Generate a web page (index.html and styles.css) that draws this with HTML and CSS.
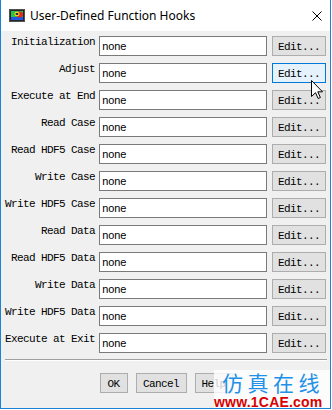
FILE: index.html
```html
<!DOCTYPE html>
<html>
<head>
<meta charset="utf-8">
<title>User-Defined Function Hooks</title>
<link rel="stylesheet" href="styles.css">
</head>
<body>
<div class="window">
  <div class="titlebar">
    <svg class="app-icon" viewBox="0 0 16 13" width="16" height="13">
      <rect x="0" y="0" width="16" height="13" fill="#505050"/>
      <rect x="1" y="1" width="14" height="11" fill="#262626"/>
      <rect x="2" y="2" width="12" height="9" fill="#27c24a"/>
      <rect x="2" y="8" width="12" height="3" fill="#1f58e6"/>
      <ellipse cx="10.5" cy="5.5" rx="3.5" ry="3" fill="#e3261f"/>
      <ellipse cx="8" cy="5" rx="2.6" ry="2.2" fill="#f6d21c"/>
      <ellipse cx="8" cy="5" rx="1.5" ry="1.1" fill="#141446"/>
    </svg>
    <span class="title">User-Defined Function Hooks</span>
    <svg class="close" viewBox="0 0 10 10" width="10" height="10">
      <path d="M0.5 0.5 L9.5 9.5 M9.5 0.5 L0.5 9.5" stroke="#000" stroke-width="1" fill="none"/>
    </svg>
  </div>
  <div class="client">
    <div class="hooks">
      <span class="lbl">Initialization</span><div class="field">none</div><button class="btn edit">Edit...</button>
      <span class="lbl">Adjust</span><div class="field">none</div><button class="btn edit hover">Edit...</button>
      <span class="lbl">Execute at End</span><div class="field">none</div><button class="btn edit">Edit...</button>
      <span class="lbl">Read Case</span><div class="field">none</div><button class="btn edit">Edit...</button>
      <span class="lbl">Read HDF5 Case</span><div class="field">none</div><button class="btn edit">Edit...</button>
      <span class="lbl">Write Case</span><div class="field">none</div><button class="btn edit">Edit...</button>
      <span class="lbl">Write HDF5 Case</span><div class="field">none</div><button class="btn edit">Edit...</button>
      <span class="lbl">Read Data</span><div class="field">none</div><button class="btn edit">Edit...</button>
      <span class="lbl">Read HDF5 Data</span><div class="field">none</div><button class="btn edit">Edit...</button>
      <span class="lbl">Write Data</span><div class="field">none</div><button class="btn edit">Edit...</button>
      <span class="lbl">Write HDF5 Data</span><div class="field">none</div><button class="btn edit">Edit...</button>
      <span class="lbl">Execute at Exit</span><div class="field">none</div><button class="btn edit">Edit...</button>
    </div>
    <div class="sep"></div>
    <div class="actions">
      <button class="btn ok">OK</button>
      <button class="btn cancel">Cancel</button>
      <button class="btn help">Help</button>
    </div>
  </div>
  <div class="watermark">
    <div class="wm-cn">仿真在线</div>
    <div class="wm-url">www.1CAE.com</div>
  </div>
  <svg class="cursor" viewBox="0 0 12 19" width="12" height="19">
    <path d="M0.5 0.5 L0.5 16.5 L4.5 12.7 L7.2 18.5 L9.4 17.5 L6.8 11.8 L11.5 11.8 Z" fill="#fff" stroke="#000" stroke-width="1" stroke-linejoin="miter"/>
  </svg>
</div>
</body>
</html>
```

FILE: styles.css
```css
html, body {
  margin: 0;
  padding: 0;
}
body {
  width: 332px;
  height: 410px;
  background: #fff;
  overflow: hidden;
}
.window {
  position: relative;
  width: 331px;
  height: 409px;
  box-sizing: border-box;
  border: 1px solid #1883d7;
  border-top: none;
  display: flex;
  flex-direction: column;
  background: #f0f0f0;
  font-family: "Liberation Mono", monospace;
  font-size: 11px;
  letter-spacing: -0.6px;
  color: #000;
}
.titlebar {
  flex: none;
  height: 31px;
  background: #fff;
  display: flex;
  align-items: center;
  padding: 0 8px 0 8px;
}
.app-icon {
  flex: none;
  margin-right: 5px;
}
.title {
  flex: 1;
  font-family: "Noto Sans", sans-serif;
  font-size: 12px;
  letter-spacing: 0;
  line-height: 16px;
  margin-top: 1px;
}
.close {
  flex: none;
}
.client {
  flex: 1;
  padding: 5px 3px 0 4px;
}
.hooks {
  display: grid;
  grid-template-columns: 90px 168px 55px;
  grid-auto-rows: 20px;
  column-gap: 4px;
  row-gap: 7px;
}
.lbl {
  text-align: right;
  white-space: nowrap;
  line-height: 12px;
  align-self: start;
}
.field {
  box-sizing: border-box;
  height: 20px;
  border: 1px solid #7a7a7a;
  background: #fff;
  padding: 4px 2px 0;
  line-height: 12px;
}
.btn {
  display: block;
  box-sizing: border-box;
  height: 20px;
  margin: 0;
  border: 1px solid #adadad;
  border-radius: 0;
  background: #e1e1e1;
  color: #000;
  font: inherit;
  letter-spacing: inherit;
  padding: 2px 0 0;
  line-height: 16px;
  text-align: center;
}
.edit {
  width: 54px;
  justify-self: end;
}
.edit.hover {
  background: #e5f1fb;
  border-color: #0078d7;
}
.sep {
  margin-top: 6px;
  border-top: 1px solid #a0a0a0;
  border-bottom: 1px solid #fff;
}
.actions {
  display: flex;
  justify-content: center;
  gap: 8px;
  margin-top: 12px;
}
.ok { width: 28px; }
.cancel { width: 51px; }
.help { width: 38px; }
.watermark {
  position: absolute;
  left: 213px;
  top: 370px;
  width: 116px;
  bottom: 0;
  background: rgba(255, 255, 255, 0.8);
}
.wm-cn {
  font-family: "Noto Sans CJK SC", sans-serif;
  font-size: 21px;
  line-height: 24px;
  letter-spacing: 4.5px;
  color: #2190e8;
  margin-left: 8px;
}
.wm-url {
  font-family: "Liberation Sans", sans-serif;
  font-weight: bold;
  font-size: 14px;
  line-height: 14px;
  letter-spacing: 0.2px;
  color: #d90000;
  margin-left: 0;
  margin-top: 1px;
}
.cursor {
  position: absolute;
  left: 310px;
  top: 80px;
}
```
